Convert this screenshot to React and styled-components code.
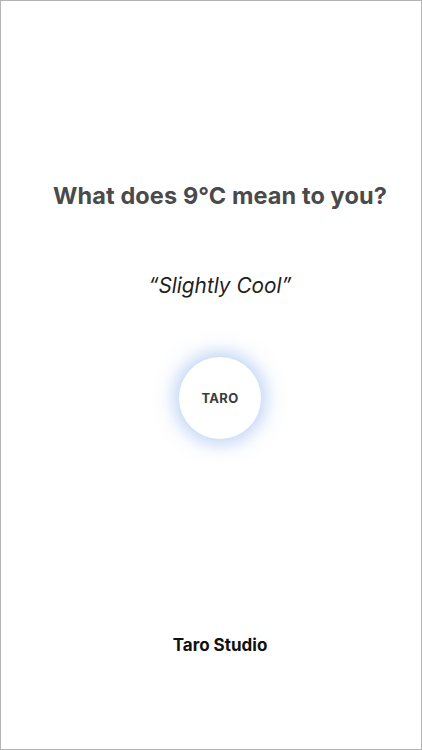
import React from 'react';
import styled, { createGlobalStyle } from 'styled-components';

const GlobalStyle = createGlobalStyle`
  html, body {
    margin: 0;
    padding: 0;
    background: #fff;
  }
  body {
    font-family: Inter, "Liberation Sans", Arial, sans-serif;
  }
`;

const Screen = styled.div`
  box-sizing: border-box;
  width: 422px;
  height: 750px;
  border: 1px solid #b4b4b4;
  background: #fff;
  display: flex;
  flex-direction: column;
  align-items: center;
  padding: 179px 0 0 18px;
`;

const Question = styled.h1`
  margin: 0;
  font-size: 23.5px;
  line-height: 32px;
  font-weight: 700;
  color: #4a4a4a;
  letter-spacing: 0.1px;
  white-space: nowrap;
`;

const Answer = styled.p`
  margin: 60px 0 0;
  font-size: 20.8px;
  line-height: 28px;
  font-style: italic;
  font-weight: 400;
  color: #1f1f1f;
`;

const Bubble = styled.div`
  margin-top: 57px;
  width: 82px;
  height: 82px;
  border-radius: 50%;
  background: #fff;
  display: flex;
  align-items: center;
  justify-content: center;
  box-shadow: 0 0 18px 5px rgba(125, 168, 238, 0.5);
  font-size: 13px;
  font-weight: 700;
  color: #3c3c3c;
  letter-spacing: 0.3px;
`;

const Spacer = styled.div`
  flex: 1;
`;

const Footer = styled.div`
  margin-bottom: 93px;
  font-size: 17px;
  line-height: 22px;
  font-weight: 700;
  color: #111;
`;

export default function App() {
  return (
    <>
      <GlobalStyle />
      <Screen>
        <Question>What does 9°C mean to you?</Question>
        <Answer>“Slightly Cool”</Answer>
        <Bubble>TARO</Bubble>
        <Spacer />
        <Footer>Taro Studio</Footer>
      </Screen>
    </>
  );
}
